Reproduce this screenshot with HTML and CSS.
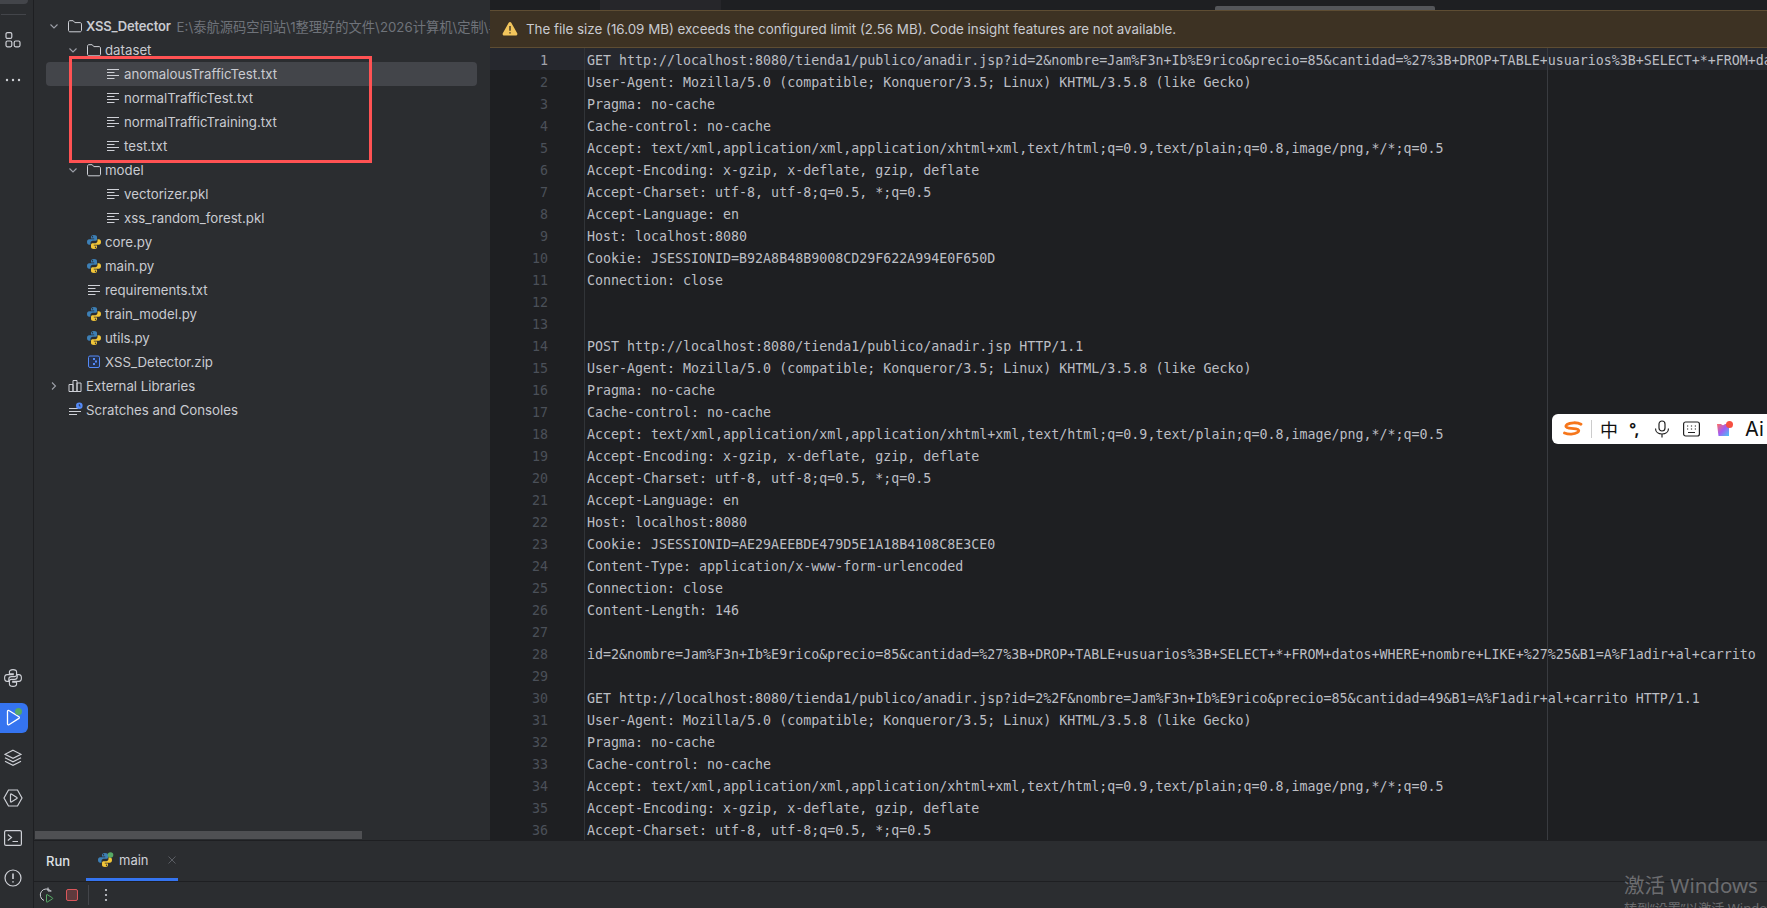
FILE: index.html
```html
<!DOCTYPE html>
<html lang="en">
<head>
    <meta charset="UTF-8">
    <title>XSS_Detector</title>
    <link rel="stylesheet" href="styles.css">
</head>
<body>
    <svg class="sprite" xmlns="http://www.w3.org/2000/svg">
        <symbol id="i-folder" viewBox="0 0 16 16">
            <path d="M1.500 4.200c0-.9.600-1.500 1.500-1.500h3.200l1.600 1.900h5.200c.9 0 1.500.6 1.500 1.500v6.200c0 .9-.6 1.500-1.500 1.500H3c-.9 0-1.500-.6-1.500-1.500z" fill="none" stroke="#ced0d6" stroke-width="1"/>
        </symbol>
        <symbol id="i-text" viewBox="0 0 14 14">
            <path d="M1 2.500h12M1 5.500h7.500M1 8.500h12M1 11.500h7.500" fill="none" stroke="#ced0d6" stroke-width="1"/>
        </symbol>
        <symbol id="i-python" viewBox="0 0 14 14">
            <path d="M7 0C4.600 0 4 1 4 2v1.600h3.200v.6H2.100C.9 4.200 0 5.200 0 7s.9 2.800 2.100 2.800H3.500V8c0-1.200 1-2.200 2.200-2.200h2.700C9.300 5.800 10 5.100 10 4.200V2c0-1.100-1-2-3-2z" fill="#3d7fb5"/>
            <path d="M7 14c2.400 0 3-1 3-2v-1.600H6.800v-.6h5.100c1.200 0 2.100-1 2.100-2.800s-.9-2.800-2.100-2.800h-1.400V6c0 1.200-1 2.200-2.200 2.200H5.600C4.700 8.200 4 8.900 4 9.800V12c0 1.100 1 2 3 2z" fill="#f2c638"/>
            <circle cx="5.500" cy="1.800" r=".7" fill="#2b2d30"/>
            <circle cx="8.500" cy="12.200" r=".7" fill="#2b2d30"/>
        </symbol>
        <symbol id="i-chevron" viewBox="0 0 16 16">
            <path d="M4.500 6.500 8 10l3.500-3.500" fill="none" stroke="#9da0a8" stroke-width="1.100"/>
        </symbol>
    </svg>

    <div class="stripe">
        <div class="stripe-top">
            <div class="stripe-stub"></div>
            <div class="stripe-sep"></div>
            <div class="stripe-btn">
                <svg width="18" height="18" viewBox="0 0 18 18" fill="none" stroke="#ced0d6" stroke-width="1.200">
                    <rect x="2" y="1.600" width="5.800" height="5.800" rx="1.500"/>
                    <rect x="2" y="10" width="5.800" height="5.800" rx="1.500"/>
                    <rect x="10.200" y="10" width="5.800" height="5.800" rx="1.500"/>
                </svg>
            </div>
            <div class="stripe-btn">
                <svg width="18" height="18" viewBox="0 0 18 18" fill="#ced0d6">
                    <circle cx="3" cy="9" r="1.200"/><circle cx="9" cy="9" r="1.200"/><circle cx="15" cy="9" r="1.200"/>
                </svg>
            </div>
        </div>
        <div class="stripe-bottom">
            <div class="stripe-btn">
                <svg width="18" height="18" viewBox="-.5 -.5 15 15" fill="none" stroke="#ced0d6" stroke-width=".95">
                    <path d="M7 0C4.600 0 4 1 4 2v1.600h3.200v.6H2.100C.9 4.200 0 5.200 0 7s.9 2.800 2.100 2.800H3.500V8c0-1.200 1-2.200 2.200-2.200h2.700C9.300 5.800 10 5.100 10 4.200V2c0-1.100-1-2-3-2z"/>
                    <path d="M7 14c2.400 0 3-1 3-2v-1.600H6.800v-.6h5.100c1.200 0 2.100-1 2.100-2.800s-.9-2.800-2.100-2.800h-1.400V6c0 1.200-1 2.200-2.200 2.200H5.600C4.700 8.200 4 8.900 4 9.800V12c0 1.100 1 2 3 2z"/>
                </svg>
            </div>
            <div class="stripe-btn stripe-active">
                <svg width="18" height="20" viewBox="0 0 18 20">
                    <path d="M2.500 3.300c0-.8.800-1.200 1.400-.8l10 6.300c.6.400.6 1.200 0 1.600l-10 6.300c-.6.400-1.400 0-1.400-.8z" fill="none" stroke="#fff" stroke-width="1.300"/>
                    <circle cx="13.500" cy="3.500" r="3.500" fill="#57a965"/>
                </svg>
            </div>
            <div class="stripe-btn">
                <svg width="18" height="18" viewBox="0 0 18 18" fill="none" stroke="#ced0d6" stroke-width="1.200">
                    <path d="M9 1.200 17 5.300 9 9.400 1 5.300z"/>
                    <path d="M1 8.800 9 12.900 17 8.800M1 12.300 9 16.400 17 12.300"/>
                </svg>
            </div>
            <div class="stripe-btn">
                <svg width="20" height="18" viewBox="0 0 20 18" fill="none" stroke="#ced0d6" stroke-width="1.200">
                    <path d="M5.500 1h9L19 9l-4.500 8h-9L1 9z"/>
                    <path d="M7.500 5.500c0-.5.400-.7.800-.5l5.600 3.500c.4.200.4.800 0 1L8.300 13c-.4.200-.8 0-.8-.5z"/>
                </svg>
            </div>
            <div class="stripe-btn">
                <svg width="18" height="16" viewBox="0 0 18 16" fill="none" stroke="#ced0d6" stroke-width="1.200">
                    <rect x=".6" y=".6" width="16.800" height="14.800" rx="1.500"/>
                    <path d="M3.800 4.500 7.500 7.500 3.800 10.500M8.500 11.500h5.500"/>
                </svg>
            </div>
            <div class="stripe-btn">
                <svg width="18" height="18" viewBox="0 0 18 18" fill="none" stroke="#ced0d6" stroke-width="1.200">
                    <circle cx="9" cy="9" r="8"/>
                    <path d="M9 4.500v5.500M9 12.200v1.400" stroke-width="1.600"/>
                </svg>
            </div>
        </div>
    </div>

    <div class="main">
        <div class="workspace">
            <div class="project">
                <div class="tree">
                    <div class="row">
                        <span class="arrow"><svg width="16" height="16"><use href="#i-chevron"/></svg></span>
                        <svg class="icon" width="16" height="16"><use href="#i-folder"/></svg>
                        <span class="name root-name">XSS_Detector</span>
                        <span class="path">E:\泰航源码空间站\1整理好的文件\2026计算机\定制\毕设</span>
                    </div>
                    <div class="row lvl1">
                        <span class="arrow"><svg width="16" height="16"><use href="#i-chevron"/></svg></span>
                        <svg class="icon" width="16" height="16"><use href="#i-folder"/></svg>
                        <span class="name">dataset</span>
                    </div>
                    <div class="row lvl2 selected">
                        <span class="arrow"></span>
                        <svg class="icon" width="16" height="14"><use href="#i-text"/></svg>
                        <span class="name">anomalousTrafficTest.txt</span>
                    </div>
                    <div class="row lvl2">
                        <span class="arrow"></span>
                        <svg class="icon" width="16" height="14"><use href="#i-text"/></svg>
                        <span class="name">normalTrafficTest.txt</span>
                    </div>
                    <div class="row lvl2">
                        <span class="arrow"></span>
                        <svg class="icon" width="16" height="14"><use href="#i-text"/></svg>
                        <span class="name">normalTrafficTraining.txt</span>
                    </div>
                    <div class="row lvl2">
                        <span class="arrow"></span>
                        <svg class="icon" width="16" height="14"><use href="#i-text"/></svg>
                        <span class="name">test.txt</span>
                    </div>
                    <div class="row lvl1">
                        <span class="arrow"><svg width="16" height="16"><use href="#i-chevron"/></svg></span>
                        <svg class="icon" width="16" height="16"><use href="#i-folder"/></svg>
                        <span class="name">model</span>
                    </div>
                    <div class="row lvl2">
                        <span class="arrow"></span>
                        <svg class="icon" width="16" height="14"><use href="#i-text"/></svg>
                        <span class="name">vectorizer.pkl</span>
                    </div>
                    <div class="row lvl2">
                        <span class="arrow"></span>
                        <svg class="icon" width="16" height="14"><use href="#i-text"/></svg>
                        <span class="name">xss_random_forest.pkl</span>
                    </div>
                    <div class="row lvl1">
                        <span class="arrow"></span>
                        <svg class="icon" width="16" height="14"><use href="#i-python"/></svg>
                        <span class="name">core.py</span>
                    </div>
                    <div class="row lvl1">
                        <span class="arrow"></span>
                        <svg class="icon" width="16" height="14"><use href="#i-python"/></svg>
                        <span class="name">main.py</span>
                    </div>
                    <div class="row lvl1">
                        <span class="arrow"></span>
                        <svg class="icon" width="16" height="14"><use href="#i-text"/></svg>
                        <span class="name">requirements.txt</span>
                    </div>
                    <div class="row lvl1">
                        <span class="arrow"></span>
                        <svg class="icon" width="16" height="14"><use href="#i-python"/></svg>
                        <span class="name">train_model.py</span>
                    </div>
                    <div class="row lvl1">
                        <span class="arrow"></span>
                        <svg class="icon" width="16" height="14"><use href="#i-python"/></svg>
                        <span class="name">utils.py</span>
                    </div>
                    <div class="row lvl1">
                        <span class="arrow"></span>
                        <svg class="icon" width="16" height="14" viewBox="0 0 16 14">
                            <rect x="2.500" y="1" width="11" height="11.500" rx="1.500" fill="#25324d" stroke="#548af7"/>
                            <path d="M7 3h2v2H7zM9 5.500h2v2H9zM7 8h2v2H7z" fill="#548af7"/>
                        </svg>
                        <span class="name">XSS_Detector.zip</span>
                    </div>
                    <div class="row">
                        <span class="arrow"><svg width="16" height="16" viewBox="0 0 16 16"><path d="M6 4.500 9.500 8 6 11.500" fill="none" stroke="#9da0a8" stroke-width="1.100"/></svg></span>
                        <svg class="icon" width="16" height="14" viewBox="0 0 16 14" fill="none" stroke="#ced0d6">
                            <path d="M2 5.500h4v7H2zM6 1.500h4v11H6zM10 4h4v8.500h-4z"/>
                        </svg>
                        <span class="name">External Libraries</span>
                    </div>
                    <div class="row">
                        <span class="arrow"></span>
                        <svg class="icon" width="16" height="16" viewBox="0 0 16 16">
                            <path d="M2 6.500h9M2 9.500h12M2 12.500h8" fill="none" stroke="#ced0d6"/>
                            <circle cx="12.300" cy="3.800" r="3.300" fill="#548af7"/>
                            <path d="M12.300 2v2h1.300" fill="none" stroke="#2b2d30" stroke-width=".8"/>
                        </svg>
                        <span class="name">Scratches and Consoles</span>
                    </div>
                </div>
                <div class="hscroll"><div class="hscroll-thumb"></div></div>
                <div class="callout"></div>
            </div>

            <div class="editor">
                <div class="tabstrip">
                    <div class="tab-piece"></div>
                    <div class="tab-thumb"></div>
                </div>
                <div class="banner">
                    <svg width="16" height="16" viewBox="0 0 16 16">
                        <path d="M6.700 1.800c.6-1 2-1 2.600 0l5.900 10.400c.6 1-.1 2.300-1.300 2.300H2.100C.9 14.500.2 13.200.8 12.200z" fill="#f2c55c"/>
                        <path d="M8 5v4.800M8 11.200v1.400" stroke="#3d3223" stroke-width="1.400"/>
                    </svg>
                    <span>The file size (16.09 MB) exceeds the configured limit (2.56 MB). Code insight features are not available.</span>
                </div>
                <div class="code">
                    <div class="line current"><span class="num">1</span><span class="txt">GET http://localhost:8080/tienda1/publico/anadir.jsp?id=2&amp;nombre=Jam%F3n+Ib%E9rico&amp;precio=85&amp;cantidad=%27%3B+DROP+TABLE+usuarios%3B+SELECT+*+FROM+datos+WHERE+nombre+LIKE+%27%25&amp;B1=A%F1adir+al+carrito HTTP/1.1</span></div>
                    <div class="line"><span class="num">2</span><span class="txt">User-Agent: Mozilla/5.0 (compatible; Konqueror/3.5; Linux) KHTML/3.5.8 (like Gecko)</span></div>
                    <div class="line"><span class="num">3</span><span class="txt">Pragma: no-cache</span></div>
                    <div class="line"><span class="num">4</span><span class="txt">Cache-control: no-cache</span></div>
                    <div class="line"><span class="num">5</span><span class="txt">Accept: text/xml,application/xml,application/xhtml+xml,text/html;q=0.9,text/plain;q=0.8,image/png,*/*;q=0.5</span></div>
                    <div class="line"><span class="num">6</span><span class="txt">Accept-Encoding: x-gzip, x-deflate, gzip, deflate</span></div>
                    <div class="line"><span class="num">7</span><span class="txt">Accept-Charset: utf-8, utf-8;q=0.5, *;q=0.5</span></div>
                    <div class="line"><span class="num">8</span><span class="txt">Accept-Language: en</span></div>
                    <div class="line"><span class="num">9</span><span class="txt">Host: localhost:8080</span></div>
                    <div class="line"><span class="num">10</span><span class="txt">Cookie: JSESSIONID=B92A8B48B9008CD29F622A994E0F650D</span></div>
                    <div class="line"><span class="num">11</span><span class="txt">Connection: close</span></div>
                    <div class="line"><span class="num">12</span><span class="txt"></span></div>
                    <div class="line"><span class="num">13</span><span class="txt"></span></div>
                    <div class="line"><span class="num">14</span><span class="txt">POST http://localhost:8080/tienda1/publico/anadir.jsp HTTP/1.1</span></div>
                    <div class="line"><span class="num">15</span><span class="txt">User-Agent: Mozilla/5.0 (compatible; Konqueror/3.5; Linux) KHTML/3.5.8 (like Gecko)</span></div>
                    <div class="line"><span class="num">16</span><span class="txt">Pragma: no-cache</span></div>
                    <div class="line"><span class="num">17</span><span class="txt">Cache-control: no-cache</span></div>
                    <div class="line"><span class="num">18</span><span class="txt">Accept: text/xml,application/xml,application/xhtml+xml,text/html;q=0.9,text/plain;q=0.8,image/png,*/*;q=0.5</span></div>
                    <div class="line"><span class="num">19</span><span class="txt">Accept-Encoding: x-gzip, x-deflate, gzip, deflate</span></div>
                    <div class="line"><span class="num">20</span><span class="txt">Accept-Charset: utf-8, utf-8;q=0.5, *;q=0.5</span></div>
                    <div class="line"><span class="num">21</span><span class="txt">Accept-Language: en</span></div>
                    <div class="line"><span class="num">22</span><span class="txt">Host: localhost:8080</span></div>
                    <div class="line"><span class="num">23</span><span class="txt">Cookie: JSESSIONID=AE29AEEBDE479D5E1A18B4108C8E3CE0</span></div>
                    <div class="line"><span class="num">24</span><span class="txt">Content-Type: application/x-www-form-urlencoded</span></div>
                    <div class="line"><span class="num">25</span><span class="txt">Connection: close</span></div>
                    <div class="line"><span class="num">26</span><span class="txt">Content-Length: 146</span></div>
                    <div class="line"><span class="num">27</span><span class="txt"></span></div>
                    <div class="line"><span class="num">28</span><span class="txt">id=2&amp;nombre=Jam%F3n+Ib%E9rico&amp;precio=85&amp;cantidad=%27%3B+DROP+TABLE+usuarios%3B+SELECT+*+FROM+datos+WHERE+nombre+LIKE+%27%25&amp;B1=A%F1adir+al+carrito</span></div>
                    <div class="line"><span class="num">29</span><span class="txt"></span></div>
                    <div class="line"><span class="num">30</span><span class="txt">GET http://localhost:8080/tienda1/publico/anadir.jsp?id=2%2F&amp;nombre=Jam%F3n+Ib%E9rico&amp;precio=85&amp;cantidad=49&amp;B1=A%F1adir+al+carrito HTTP/1.1</span></div>
                    <div class="line"><span class="num">31</span><span class="txt">User-Agent: Mozilla/5.0 (compatible; Konqueror/3.5; Linux) KHTML/3.5.8 (like Gecko)</span></div>
                    <div class="line"><span class="num">32</span><span class="txt">Pragma: no-cache</span></div>
                    <div class="line"><span class="num">33</span><span class="txt">Cache-control: no-cache</span></div>
                    <div class="line"><span class="num">34</span><span class="txt">Accept: text/xml,application/xml,application/xhtml+xml,text/html;q=0.9,text/plain;q=0.8,image/png,*/*;q=0.5</span></div>
                    <div class="line"><span class="num">35</span><span class="txt">Accept-Encoding: x-gzip, x-deflate, gzip, deflate</span></div>
                    <div class="line"><span class="num">36</span><span class="txt">Accept-Charset: utf-8, utf-8;q=0.5, *;q=0.5</span></div>
                    <div class="margin-guide"></div>
                </div>
            </div>
        </div>

        <div class="run-panel">
            <div class="run-tabs">
                <span class="run-title">Run</span>
                <div class="run-tab">
                    <svg width="16" height="16" viewBox="0 0 16 16">
                        <use href="#i-python" width="14" height="14" y="1"/>
                        <circle cx="12.500" cy="3" r="2.800" fill="#57a965"/>
                    </svg>
                    <span>main</span>
                    <svg class="tab-close" width="10" height="10" viewBox="0 0 10 10"><path d="M1.500 1.500l7 7M8.500 1.500l-7 7" stroke="#5a5d63" stroke-width="1"/></svg>
                </div>
            </div>
            <div class="run-tools">
                <svg width="16" height="16" viewBox="0 0 16 16" fill="none">
                    <path d="M12.800 4A6 6 0 1 0 6 13.500" stroke="#ced0d6"/>
                    <path d="M10 .5v3.500h3.500" stroke="#ced0d6"/>
                    <path d="M8.500 8c0-.4.300-.6.700-.4l5.300 3.300c.3.200.3.700 0 .9l-5.300 3.300c-.4.200-.7 0-.7-.4z" stroke="#57a965"/>
                </svg>
                <div class="stop-btn"></div>
                <div class="tool-sep"></div>
                <svg width="4" height="14" viewBox="0 0 4 14" fill="#ced0d6"><circle cx="2" cy="2" r="1.100"/><circle cx="2" cy="7" r="1.100"/><circle cx="2" cy="12" r="1.100"/></svg>
            </div>
        </div>
    </div>

    <div class="ime">
        <svg width="20" height="16" viewBox="0 0 20 16" fill="none">
            <path d="M18 3.200C14 1 7 1.500 4 3.500c-2 1.500-1 3.200 2 3.600l7 .8c3 .4 3.500 2.200 1.500 3.500-3 2-9 2.200-13 .6" stroke="#f6761b" stroke-width="2.800" stroke-linecap="round"/>
        </svg>
        <span class="ime-sep"></span>
        <span class="ime-zh">中</span>
        <span class="ime-punct">°,</span>
        <svg width="16" height="18" viewBox="0 0 16 18" fill="none" stroke="#222" stroke-width="1.200">
            <rect x="5" y="1" width="6" height="10" rx="3"/>
            <path d="M1.500 8.500c0 3.500 3 5.500 6.500 5.500s6.500-2 6.500-5.500M8 14v3.500"/>
        </svg>
        <svg class="ime-keys" width="17" height="16" viewBox="0 0 17 16" fill="none" stroke="#222" stroke-width="1.200">
            <rect x=".6" y="1" width="15.800" height="14" rx="2"/>
            <path d="M4 5h1.200M7.900 5h1.200M11.800 5H13M4 8h1.200M7.900 8h1.200M11.800 8H13M5 11.500h7"/>
        </svg>
        <svg class="ime-shirt" width="18" height="16" viewBox="0 0 18 16">
            <defs>
                <linearGradient id="shirt" x1="0" y1="0" x2="1" y2="1">
                    <stop offset="0" stop-color="#ff6f61"/>
                    <stop offset=".5" stop-color="#a25cf2"/>
                    <stop offset="1" stop-color="#45c8f5"/>
                </linearGradient>
            </defs>
            <path d="M1 3h4c1 1.500 3 1.500 4 0h4v12H2.500z" fill="url(#shirt)"/>
            <circle cx="13.500" cy="3.500" r="3.500" fill="#f64f40"/>
        </svg>
        <span class="ime-ai">Ai</span>
    </div>

    <div class="watermark">
        <div class="wm-title">激活 Windows</div>
        <div class="wm-sub">转到“设置”以激活 Windows。</div>
    </div>
</body>
</html>
```

FILE: styles.css
```css
* { box-sizing: border-box; margin: 0; padding: 0; }
html, body { height: 100%; }
body {
    display: flex;
    width: 1767px;
    height: 908px;
    overflow: hidden;
    position: relative;
    background-color: #2b2d30;
    color: #ced0d6;
    font-family: Inter, 'Noto Sans CJK SC', sans-serif;
    font-size: 13px;
}
.sprite { display: none; }

/* left tool stripe */
.stripe {
    width: 34px;
    flex-shrink: 0;
    display: flex;
    flex-direction: column;
    justify-content: space-between;
    border-right: 1px solid #1e1f22;
    padding-bottom: 5px;
}
.stripe-stub {
    width: 28px;
    height: 4px;
    background-color: #43454a;
    border-radius: 0 0 6px 0;
}
.stripe-sep {
    width: 25px;
    height: 1px;
    margin: 10px 0 10px 1px;
    background-color: #43454a;
}
.stripe-btn {
    width: 26px;
    height: 30px;
    margin: 0 0 10px 0;
    display: flex;
    align-items: center;
    justify-content: center;
}
.stripe-active {
    width: 28px;
    background-color: #3574f0;
    border-radius: 0 6px 6px 0;
}

.main {
    flex: 1;
    min-width: 0;
    display: flex;
    flex-direction: column;
}
.workspace {
    height: 840px;
    display: flex;
}

/* project tree */
.project {
    width: 456px;
    flex-shrink: 0;
    display: flex;
    flex-direction: column;
    position: relative;
    overflow: hidden;
}
.tree {
    flex: 1;
    padding: 14px 13px 0 12px;
}
.row {
    height: 24px;
    display: flex;
    align-items: center;
    white-space: nowrap;
    border-radius: 4px;
    color: #c9cbd1;
    font-size: 13.25px;
}
.lvl1 { padding-left: 19px; }
.lvl2 { padding-left: 38px; }
.selected { background-color: #43454a; }
.arrow {
    width: 16px;
    height: 16px;
    flex-shrink: 0;
}
.icon {
    margin-left: 5px;
    margin-right: 3px;
    flex-shrink: 0;
}
.root-name {
    font-size: 13px;
    font-weight: 600;
    letter-spacing: -.2px;
}
.path {
    margin-left: 6px;
    font-size: 13.25px;
    color: #6f737a;
}
.hscroll {
    height: 9px;
    padding-bottom: 1px;
    flex-shrink: 0;
}
.hscroll-thumb {
    width: 327px;
    height: 8px;
    margin-left: 1px;
    background-color: #4f5053;
}
.callout {
    position: absolute;
    left: 35px;
    top: 56px;
    width: 303px;
    height: 107px;
    border: 3px solid #ff5253;
}

/* editor */
.editor {
    flex: 1;
    min-width: 0;
    display: flex;
    flex-direction: column;
    background-color: #1e1f22;
    overflow: hidden;
}
.tabstrip {
    height: 10px;
    flex-shrink: 0;
    display: flex;
    align-items: flex-end;
}
.tab-piece {
    width: 121px;
    height: 10px;
    margin-left: 110px;
    background-color: #26262a;
}
.tab-thumb {
    width: 220px;
    height: 4px;
    margin-left: 494px;
    background-color: #54565a;
    border-radius: 2px 2px 0 0;
}
.banner {
    height: 38px;
    flex-shrink: 0;
    display: flex;
    align-items: center;
    gap: 8px;
    padding-left: 12px;
    background-color: #3d3223;
    border-top: 1px solid #5e4d33;
    border-bottom: 1px solid #5e4d33;
    color: #c9cbd1;
    font-size: 13.37px;
}
.code {
    flex: 1;
    position: relative;
    font-family: 'DejaVu Sans Mono', monospace;
    font-size: 13.3px;
    color: #bcbec4;
}
.line {
    height: 22px;
    display: flex;
    white-space: pre;
    line-height: 26px;
}
.current { background-color: #26282e; }
.num {
    width: 95px;
    height: 22px;
    flex-shrink: 0;
    padding-right: 36px;
    text-align: right;
    color: #4b5059;
    border-right: 1px solid #313438;
}
.current .num { color: #a1a3ab; }
.txt { padding-left: 2px; }
.margin-guide {
    position: absolute;
    left: 1057px;
    top: 0;
    bottom: 0;
    width: 1px;
    background-color: #393b40;
}

/* run tool window */
.run-panel {
    flex: 1;
    border-top: 1px solid #1e1f22;
}
.run-tabs {
    height: 41px;
    display: flex;
    padding-left: 12px;
    border-bottom: 1px solid #1e1f22;
}
.run-title {
    width: 40px;
    line-height: 40px;
    font-weight: 500;
    color: #dfe1e5;
}
.run-tab {
    width: 92px;
    height: 40px;
    display: flex;
    align-items: center;
    gap: 5px;
    padding-left: 12px;
    border-bottom: 3px solid #3574f0;
}
.tab-close { margin-left: 13px; }
.run-tools {
    height: 26px;
    display: flex;
    align-items: center;
    padding-left: 4px;
}
.stop-btn {
    width: 12px;
    height: 12px;
    margin-left: 12px;
    background-color: #5f3a3d;
    border: 1px solid #d9575b;
    border-radius: 2px;
}
.tool-sep {
    width: 1px;
    height: 20px;
    margin: 0 15px 0 10px;
    background-color: #43454a;
}

/* floating input method bar */
.ime {
    position: absolute;
    left: 1552px;
    top: 414px;
    width: 215px;
    height: 30px;
    display: flex;
    align-items: center;
    padding-left: 11px;
    gap: 11px;
    background-color: #fff;
    border-radius: 6px 0 0 6px;
    color: #111;
    overflow: hidden;
}
.ime-sep {
    width: 1px;
    height: 18px;
    margin-left: -3px;
    background-color: #ccc;
}
.ime-zh {
    margin-left: -3px;
    font-family: 'Noto Sans CJK SC', sans-serif;
    font-size: 18px;
}
.ime-punct {
    width: 14px;
    font-size: 16px;
    font-weight: 700;
}
.ime-keys { margin-left: 2px; }
.ime-shirt { margin-left: 5px; }
.ime-ai { font-size: 20px; }

.watermark {
    position: absolute;
    left: 1624px;
    top: 872px;
    color: #6b6c6f;
    white-space: nowrap;
}
.wm-title {
    font-family: 'Noto Sans', 'Noto Sans CJK SC', sans-serif;
    font-size: 20.5px;
    line-height: 27px;
}
.wm-sub {
    font-family: 'Noto Sans', 'Noto Sans CJK SC', sans-serif;
    font-size: 13px;
    line-height: 18px;
}
```
